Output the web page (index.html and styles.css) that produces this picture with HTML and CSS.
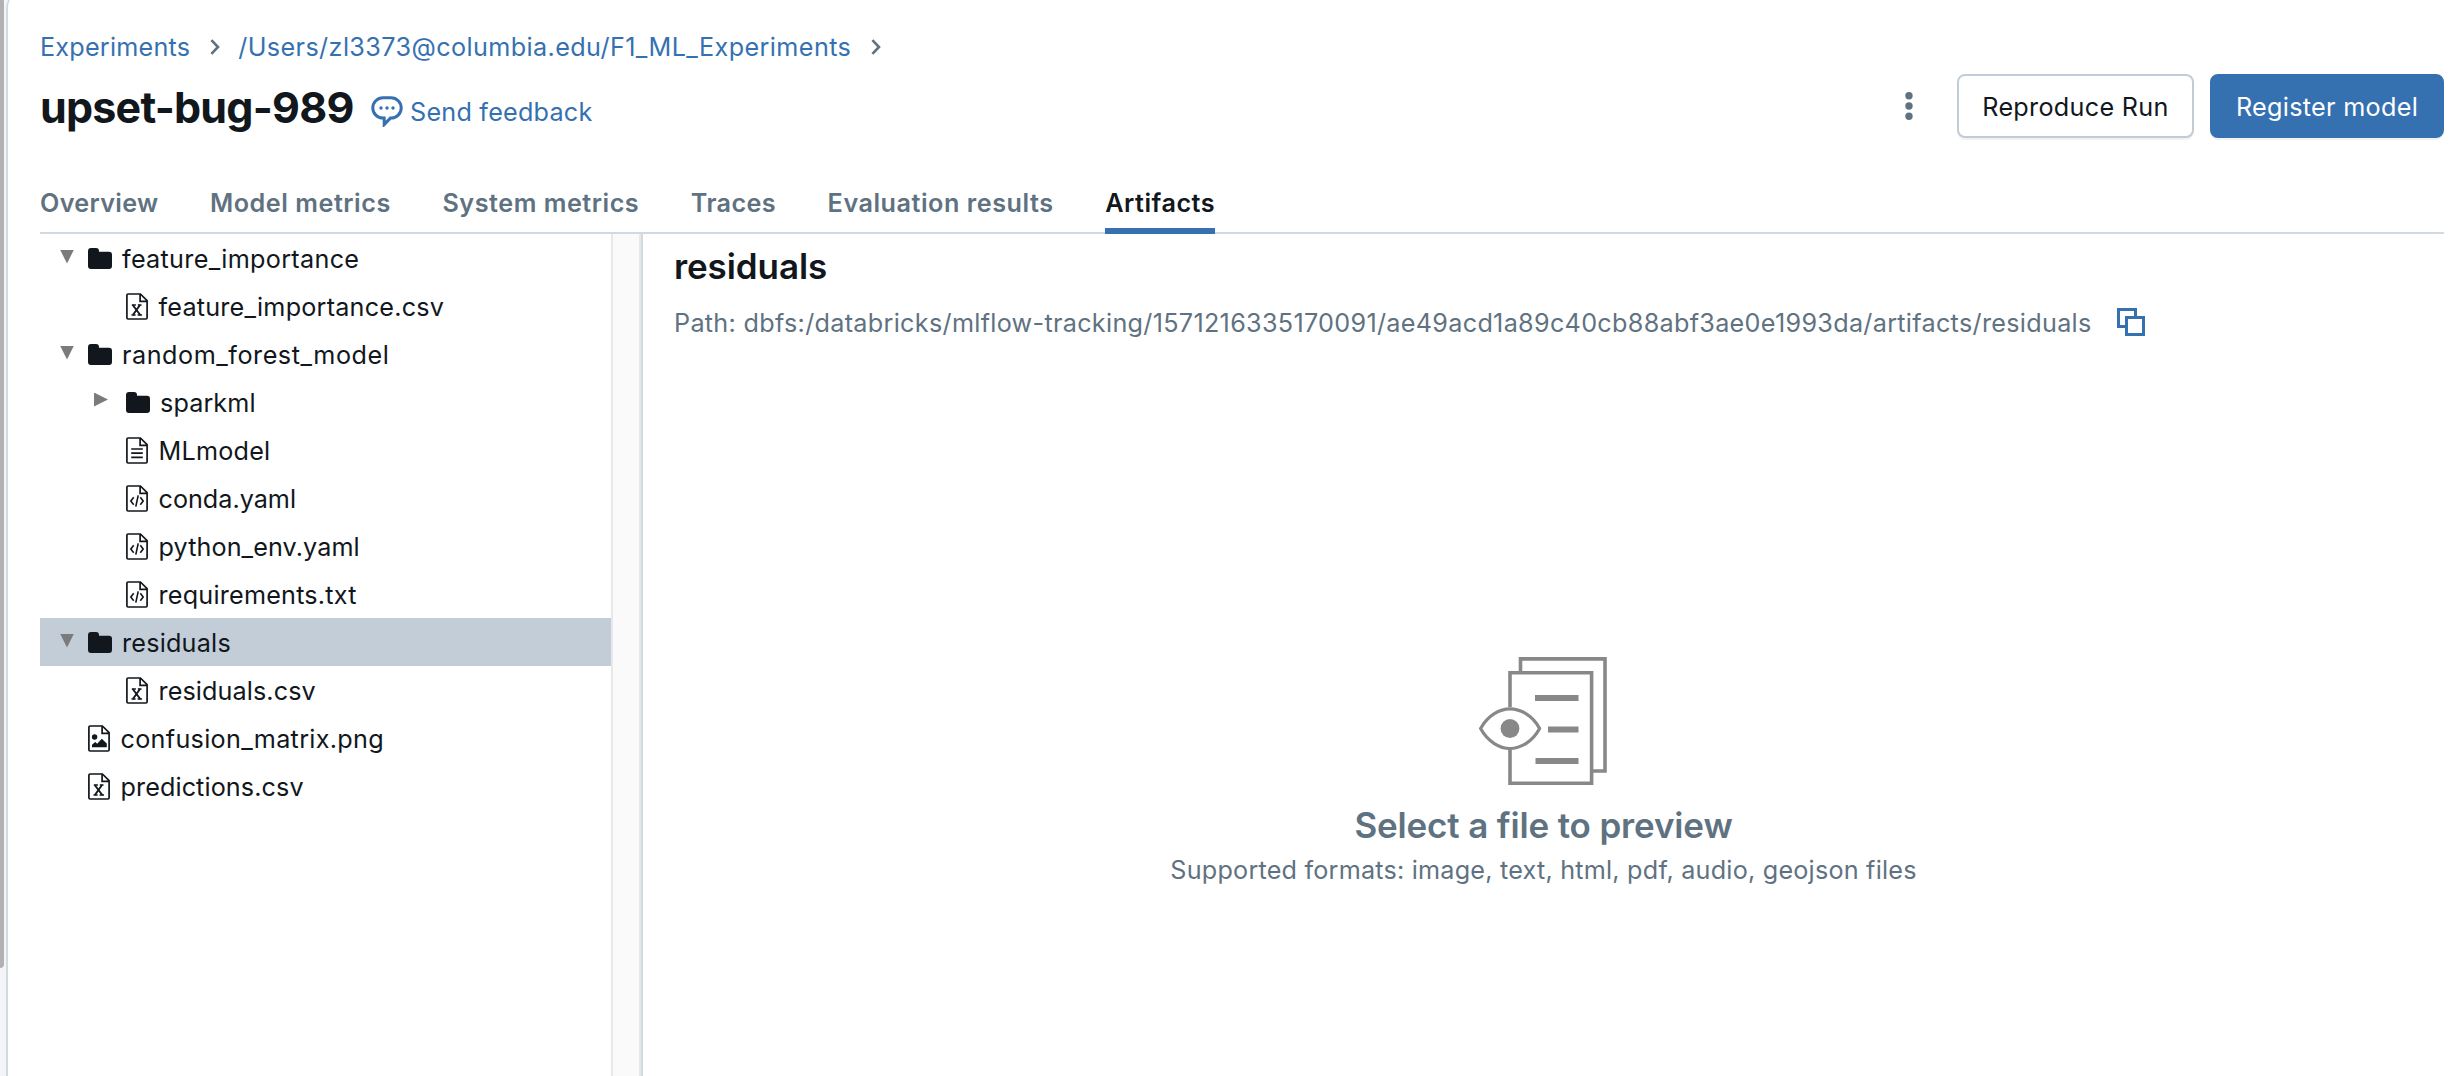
FILE: index.html
```html
<!DOCTYPE html>
<html lang="en">
<head>
<meta charset="utf-8">
<title>upset-bug-989</title>
<link rel="stylesheet" href="styles.css">
</head>
<body>
<svg class="sprite" aria-hidden="true">
  <symbol id="folder" viewBox="0 0 24 21"><path d="M0 3a3 3 0 0 1 3-3h5a3 3 0 0 1 3 3v.7h10a3 3 0 0 1 3 3V18a3 3 0 0 1-3 3H3a3 3 0 0 1-3-3z" fill="currentColor"/></symbol>
  <symbol id="page" viewBox="0 0 22 27"><path d="M.9 2.2V24.8Q.9 26 2.1 26H19.9Q21.1 26 21.1 24.8V7.7L14.4 1H2.1Q.9 1 .9 2.2zM14.1 1V8.3H21" fill="none" stroke="currentColor" stroke-width="1.7"/></symbol>
  <symbol id="csv" viewBox="0 0 22 27"><use href="#page"/><path d="M6.7 12l7.6 10M14 12L6.9 22" fill="none" stroke="currentColor" stroke-width="1.9"/><path d="M5.8 12h4.1M11.8 12h3.7M5.5 22h4.1M11.6 22h4.4" stroke="currentColor" stroke-width="1.4"/></symbol>
  <symbol id="text" viewBox="0 0 22 27"><use href="#page"/><path d="M5.2 12h11.6M5.2 16.2h11.6M5.2 20.4h11.6" stroke="currentColor" stroke-width="1.7"/></symbol>
  <symbol id="code" viewBox="0 0 22 27"><use href="#page"/><path d="M7.7 12.3L4.8 16l2.9 3.7M14.3 12.3l2.9 3.7-2.9 3.7M12.2 10.3L9.8 21.7" fill="none" stroke="currentColor" stroke-width="1.6"/></symbol>
  <symbol id="image" viewBox="0 0 22 27"><use href="#page"/><circle cx="6.6" cy="12" r="2.7" fill="currentColor"/><path d="M4 22.3v-2.6l3.2-2.6 2 1.6 4.6-5 5 4.8v3.8z" fill="currentColor"/></symbol>
</svg>
<div class="app">
  <aside class="rail"><div class="scroll-thumb"></div></aside>
  <main class="panel">
    <nav class="breadcrumb">
      <a class="ls-2">Experiments</a>
      <svg class="chevron" viewBox="0 0 10 16"><path d="M1.4 1.2L8 8l-6.6 6.8"/></svg>
      <a class="ls-4">/Users/zl3373@columbia.edu/F1_ML_Experiments</a>
      <svg class="chevron" viewBox="0 0 10 16"><path d="M1.4 1.2L8 8l-6.6 6.8"/></svg>
    </nav>
    <header class="title-row">
      <h1>upset-bug-989</h1>
      <a class="feedback">
        <svg viewBox="0 0 32 31"><path d="M12 1.7h8a10 10 0 0 1 0 20.4h-.6L13.2 28.6V22.1H12a10.2 10.2 0 0 1 0-20.4z" fill="none" stroke="currentColor" stroke-width="3"/><g fill="currentColor"><circle cx="10" cy="12" r="1.7"/><circle cx="16" cy="12" r="1.7"/><circle cx="22" cy="12" r="1.7"/></g></svg>
        <span class="ls-2">Send feedback</span>
      </a>
      <div class="actions">
        <svg class="kebab" viewBox="0 0 8 28"><circle cx="4" cy="3.7" r="3.7"/><circle cx="4" cy="14" r="3.7"/><circle cx="4" cy="24.3" r="3.7"/></svg>
        <button class="btn ls-3">Reproduce Run</button>
        <button class="btn primary ls-3">Register model</button>
      </div>
    </header>
    <nav class="tabs">
      <a class="tab ls-3">Overview</a>
      <a class="tab ls-5">Model metrics</a>
      <a class="tab ls-5">System metrics</a>
      <a class="tab ls-4">Traces</a>
      <a class="tab ls-5">Evaluation results</a>
      <a class="tab active ls-5">Artifacts</a>
    </nav>
    <div class="content">
      <ul class="tree">
        <li class="row"><i class="arrow down"></i><svg class="folder"><use href="#folder"/></svg><span class="ls-3">feature_importance</span></li>
        <li class="row child"><svg class="file"><use href="#csv"/></svg><span class="ls-2">feature_importance.csv</span></li>
        <li class="row"><i class="arrow down"></i><svg class="folder"><use href="#folder"/></svg><span class="ls-5">random_forest_model</span></li>
        <li class="row child"><i class="arrow right"></i><svg class="folder"><use href="#folder"/></svg><span class="ls-1">sparkml</span></li>
        <li class="row child"><svg class="file"><use href="#text"/></svg><span class="ls-2">MLmodel</span></li>
        <li class="row child"><svg class="file"><use href="#code"/></svg><span>conda.yaml</span></li>
        <li class="row child"><svg class="file"><use href="#code"/></svg><span class="ls-1">python_env.yaml</span></li>
        <li class="row child"><svg class="file"><use href="#code"/></svg><span class="ls-2">requirements.txt</span></li>
        <li class="row selected"><i class="arrow down"></i><svg class="folder"><use href="#folder"/></svg><span class="ls-2">residuals</span></li>
        <li class="row child"><svg class="file"><use href="#csv"/></svg><span class="ls-1">residuals.csv</span></li>
        <li class="row"><svg class="file"><use href="#image"/></svg><span class="ls-3">confusion_matrix.png</span></li>
        <li class="row"><svg class="file"><use href="#csv"/></svg><span class="ls-1">predictions.csv</span></li>
      </ul>
      <div class="gutter"></div>
      <section class="detail">
        <h2>residuals</h2>
        <div class="path">
          <span>Path: dbfs:/databricks/mlflow-tracking/1571216335170091/ae49acd1a89c40cb88abf3ae0e1993da/artifacts/residuals</span>
          <svg class="copy" viewBox="0 0 28 28"><path d="M8 18.5H1.5v-17h17V8M9.5 9.5h17v17h-17z"/></svg>
        </div>
        <div class="empty">
          <svg viewBox="0 0 128 128" fill="none" stroke="#888" stroke-width="3.6">
            <path d="M41.5 14V1.9H126V114H114M31 50V15.8H112.6V126.3H31V92"/>
            <path d="M1.6 71.5C9 58 21 51.8 31 51.8S53.5 58 60.6 71.5C53.5 85 41 91.5 31 91.5S9 85 1.6 71.5z" stroke-width="3.2"/>
            <circle cx="31" cy="71.5" r="9.4" fill="#888" stroke="none"/>
            <path d="M56 41H99.5M69 72.5H99.5M56.5 104H99.5" stroke-width="6.2"/>
          </svg>
          <h3>Select a file to preview</h3>
          <p class="ls-2">Supported formats: image, text, html, pdf, audio, geojson files</p>
        </div>
      </section>
    </div>
  </main>
</div>
</body>
</html>
```
FILE: styles.css
```css
* { box-sizing: border-box; }
body {
  margin: 0;
  font: 400 25.2px/40px Inter, sans-serif;
  color: #11171c;
  background: #f3f5f9;
}
h1, h2, h3, p, ul { margin: 0; padding: 0; font-weight: 600; }
p { font-weight: 400; }
svg { flex: none; display: block; }
.sprite { position: absolute; width: 0; height: 0; }

.ls-1 { letter-spacing: 0.09px; }
.ls-2 { letter-spacing: 0.21px; }
.ls-3 { letter-spacing: 0.3px; }
.ls-4 { letter-spacing: 0.39px; }
.ls-5 { letter-spacing: 0.53px; }

.app { display: flex; height: 1076px; overflow: hidden; }
.rail { width: 6px; flex: none; }
.scroll-thumb { width: 4px; height: 968px; background: #b1b1b4; border-bottom-right-radius: 4px; }
.panel {
  flex: 1;
  min-width: 0;
  display: flex;
  flex-direction: column;
  margin-top: -8px;
  padding: 35px 10px 0 32px;
  background: #fff;
  border-left: 2px solid #d1d9e1;
  border-top-left-radius: 16px;
}

.breadcrumb { display: flex; align-items: center; height: 40px; color: #3571b0; }
.chevron { width: 10px; height: 16px; margin: 0 18px 0 20px; fill: none; stroke: #5f7281; stroke-width: 2.6; }

.title-row { display: flex; align-items: center; height: 78px; }
h1 { font-size: 43px; font-weight: 700; line-height: 56px; letter-spacing: -0.78px; padding-top: 2px; }
.feedback { display: flex; align-items: center; gap: 7.5px; margin-left: 17px; padding-top: 12px; color: #3571b0; }
.feedback svg { width: 32px; height: 31px; margin-bottom: 1px; }
.actions { display: flex; align-items: center; margin-left: auto; }
.kebab { width: 8px; height: 28px; margin-right: 44px; fill: #5f7281; }
.btn {
  height: 64px;
  width: 237px;
  padding: 2px 0 0;
  font-family: inherit;
  font-size: inherit;
  color: #11171c;
  background: #fff;
  border: 2px solid #c0cdd8;
  border-radius: 8px;
  box-shadow: 0 2px 0 rgba(0, 0, 0, 0.05);
}
.btn.primary { width: 234px; margin-left: 16px; color: #fff; background: #3571b0; border-color: #3571b0; }

.tabs { display: flex; gap: 51.6px; height: 89px; padding-top: 42px; box-shadow: inset 0 -2px #d1d9e1; }
.tab { height: 47px; font-weight: 600; line-height: 32px; color: #5f7281; white-space: nowrap; }
.tab.active { color: #11171c; border-bottom: 6px solid #3571b0; }

.content { display: flex; flex: 1; min-height: 0; }
.tree { width: 571px; list-style: none; }
.row { display: flex; align-items: center; height: 48px; padding-left: 48px; font-weight: 400; white-space: nowrap; }
.row span { padding-top: 2px; }
.row.child { padding-left: 86px; }
.row.selected { background: #c3cdd8; }
.arrow { width: 14px; height: 14px; margin: 0 14px 3px -28px; background: #7b7b7b; }
.arrow.down { clip-path: polygon(0 0, 100% 0, 50% 100%); }
.arrow.right { clip-path: polygon(0 0, 100% 50%, 0 100%); margin: 0 18px 5px -32px; }
.folder { width: 24px; height: 21px; margin-right: 10px; }
.file { width: 22px; height: 27px; margin-right: 10.5px; }
.gutter {
  width: 30px;
  background: #fafafa;
  border-left: 2px solid #e8e8e8;
  border-right: 2px solid #e8e8e8;
}

.detail { flex: 1; min-width: 0; display: flex; flex-direction: column; border-left: 2px solid #d1d9e1; }
h2 { font-size: 35px; line-height: 48px; letter-spacing: -0.1px; margin: 8px 0 0 31px; }
.path { display: flex; align-items: center; height: 40px; margin: 13px 0 0 31px; color: #5f7281; letter-spacing: 0.3px; white-space: nowrap; }
.copy { width: 28px; height: 28px; margin-left: 25px; margin-bottom: 2px; fill: none; stroke: #3571b0; stroke-width: 3; }
.empty { display: flex; flex-direction: column; align-items: center; margin-top: 314px; color: #5f7281; }
.empty svg { width: 128px; height: 128px; margin-right: 2px; }
h3 { font-size: 35px; line-height: 48px; letter-spacing: -0.15px; margin-top: 16px; }
.empty p { line-height: 40px; margin-top: 1px; }
```
